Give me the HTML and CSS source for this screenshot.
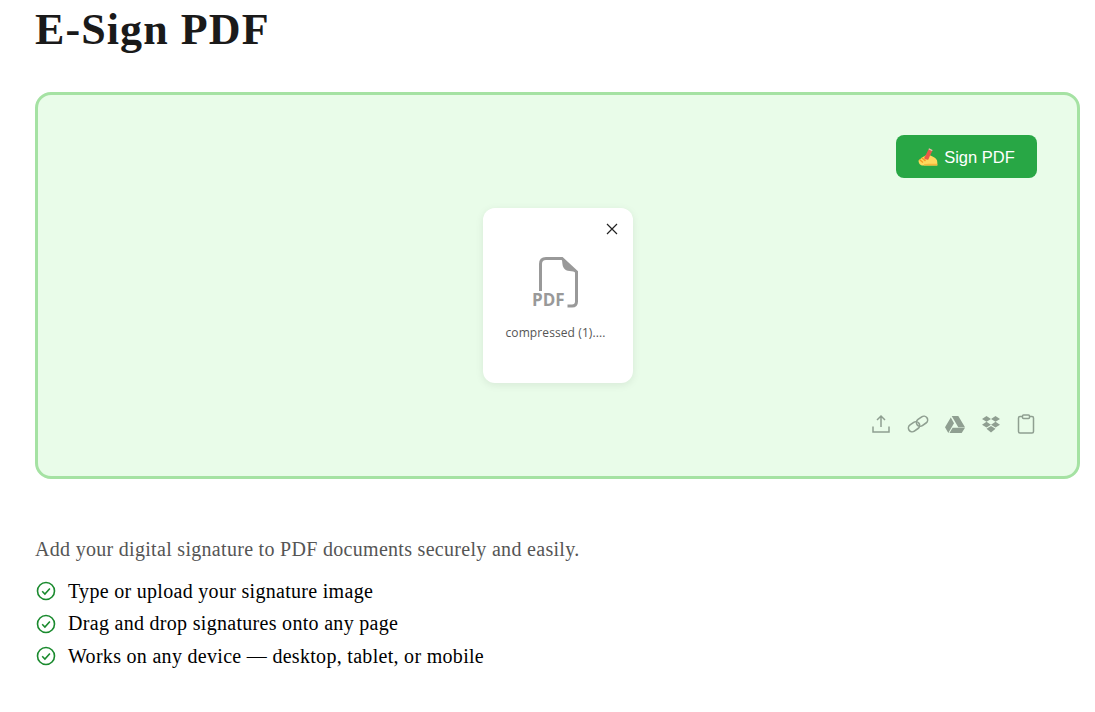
FILE: index.html
```html
<!DOCTYPE html>
<html lang="en">
<head>
  <meta charset="UTF-8">
  <meta name="viewport" content="width=device-width, initial-scale=1.0">
  <title>E-Sign PDF</title>
  <link rel="stylesheet" href="styles.css">
</head>
<body>
  <main class="page">
    <h1 class="title">E-Sign PDF</h1>

    <section class="dropzone">
      <div class="dropzone-top">
        <button class="sign-btn" type="button">
          <svg class="sign-emoji" viewBox="0 0 20 18" width="20" height="18">
            <path d="M0.500 12.500 4 9.500 8.500 7l4 .5 3 1.500c2.500 1 3.800 3 3.800 5.200V17.500H5C2.500 17.500.5 15.500.5 12.500Z" fill="#fdd85d"/>
            <path d="M1.500 11.500 5 14.500M3.800 9.800 7.500 13M6.500 8.500 10 11.500" stroke="#f59a23" stroke-width="1.500" fill="none"/>
            <path d="M6.500 9.500 10.500 1.500l3.600 1.700-3.800 8.300-3.800-.3Z" fill="#ea5a47"/>
            <path d="M10.500 1.500 11 .3l3.600 1.700-.5 1.200Z" fill="#f8b4a8"/>
            <path d="M6 16.200c4-.6 8-.6 13.300-.5V17.500H6Z" fill="#f6b73c"/>
          </svg>
          <span>Sign PDF</span>
        </button>
      </div>

      <div class="file-card">
        <button class="file-close" type="button" aria-label="Remove">
          <svg viewBox="0 0 12 12" width="12" height="12">
            <path d="M1 1l10 10M11 1 1 11" stroke="#222" stroke-width="1.200" fill="none"/>
          </svg>
        </button>
        <div class="file-icon">
          <svg viewBox="0 0 46 54" width="46" height="54">
            <path d="M8.500 34V7C8.500 3.500 10.500 1.500 14 1.500H30L44.500 15v29.500c0 3-1.700 4.500-4.500 4.500H35.500" fill="none" stroke="#999" stroke-width="3"/>
            <path d="M30 1c0 0 .2 6.500 1 8.500 .8 2.300 2.500 3.800 4.800 4.300L45 15Z" fill="#999"/>
            <text class="file-icon-label" x="0" y="49">PDF</text>
          </svg>
        </div>
        <div class="file-name">compressed (1)....</div>
      </div>

      <div class="source-icons">
        <svg viewBox="0 0 20 20" width="20" height="20">
          <path d="M10 13V2.500M6 6l4-4 4 4M2 12.500V18h16v-5.500" fill="none" stroke="#8f9f91" stroke-width="1.500"/>
        </svg>
        <svg viewBox="0 0 22 20" width="22" height="20">
          <g fill="none" stroke="#8f9f91" stroke-width="1.600">
            <rect x="1" y="9" width="12" height="7.500" rx="3.750" transform="rotate(-35 7 12.700)"/>
            <rect x="9" y="3.500" width="12" height="7.500" rx="3.750" transform="rotate(-35 15 7.200)"/>
          </g>
        </svg>
        <svg viewBox="0 0 20 17" width="20" height="17">
          <path d="M6.700 0h6.600L20 11.300h-6.700ZM5.800 1.600 9 7.200 3.300 17 0 11.300ZM7.600 11.700H20L16.700 17H4.500Z" fill="#8f9f91"/>
        </svg>
        <svg viewBox="0 0 20 17" width="20" height="17">
          <path d="M5.500 0 10 2.900 5.500 5.800 1 2.900ZM14.500 0 19 2.900 14.500 5.800 10 2.900ZM5.500 5.800 10 8.700l-4.500 2.900L1 8.700ZM14.500 5.800 19 8.700l-4.500 2.900L10 8.700ZM5.500 12.800 10 9.900l4.500 2.900L10 16.500Z" fill="#8f9f91"/>
        </svg>
        <svg viewBox="0 0 18 20" width="18" height="20">
          <path d="M5.500 2.500H3c-1 0-1.500.5-1.500 1.500v13.500c0 1 .5 1.500 1.500 1.500h12c1 0 1.500-.5 1.500-1.500V4c0-1-.5-1.500-1.500-1.500h-2.500" fill="none" stroke="#8f9f91" stroke-width="1.500"/>
          <rect x="5.500" y="1" width="7" height="3.500" rx="1" fill="none" stroke="#8f9f91" stroke-width="1.500"/>
        </svg>
      </div>
    </section>

    <section class="about">
      <p class="about-lead">Add your digital signature to PDF documents securely and easily.</p>
      <ul class="about-list">
        <li>
          <svg class="check" viewBox="0 0 20 20" width="20" height="20">
            <circle cx="10" cy="10" r="8.500"/><path d="M6.200 10.300 8.900 13l5-5.500"/>
          </svg>
          Type or upload your signature image
        </li>
        <li>
          <svg class="check" viewBox="0 0 20 20" width="20" height="20">
            <circle cx="10" cy="10" r="8.500"/><path d="M6.200 10.300 8.900 13l5-5.500"/>
          </svg>
          Drag and drop signatures onto any page
        </li>
        <li>
          <svg class="check" viewBox="0 0 20 20" width="20" height="20">
            <circle cx="10" cy="10" r="8.500"/><path d="M6.200 10.300 8.900 13l5-5.500"/>
          </svg>
          Works on any device — desktop, tablet, or mobile
        </li>
      </ul>
    </section>
  </main>
</body>
</html>
```

FILE: styles.css
```css
* {
  box-sizing: border-box;
}
body {
  margin: 0;
  background: #fff;
  font-family: "Liberation Serif", serif;
  color: #000;
}
.page {
  width: 1080px;
  padding-left: 35px;
}
.title {
  margin: 0;
  height: 92px;
  padding-top: 5px;
  font-size: 44px;
  line-height: 50px;
  font-weight: 700;
  color: #1a1a1a;
  letter-spacing: 1.1px;
}
.dropzone {
  height: 387px;
  border: 3px solid #a5e2a3;
  border-radius: 16px;
  background: #e9fce9;
  padding: 40px 40px 0;
  display: flex;
  flex-direction: column;
}
.dropzone-top {
  display: flex;
  justify-content: flex-end;
}
.sign-btn {
  width: 141px;
  height: 43px;
  border: none;
  border-radius: 8px;
  background: #28a745;
  color: #fff;
  font-family: "Liberation Sans", sans-serif;
  font-size: 16.500px;
  padding: 1px 0 0;
  display: flex;
  align-items: center;
  justify-content: center;
  gap: 6px;
}
.file-card {
  width: 150px;
  height: 175px;
  margin: 30px auto 0;
  position: relative;
  background: #fff;
  border-radius: 12px;
  box-shadow: 0 2px 8px rgba(0, 0, 0, 0.08);
  display: flex;
  flex-direction: column;
  align-items: center;
  padding-top: 49px;
}
.file-close {
  position: absolute;
  top: 15px;
  right: 15px;
  padding: 0;
  border: none;
  background: none;
  line-height: 0;
}
.file-icon {
  line-height: 0;
  height: 54px;
  margin-right: 6px;
}
.file-icon-label {
  font-family: "Open Sans", sans-serif;
  font-size: 17px;
  font-weight: 700;
  fill: #999;
}
.file-name {
  margin-top: 13px;
  margin-right: 4px;
  font-family: "Open Sans", sans-serif;
  font-size: 12px;
  letter-spacing: 0.1px;
  line-height: 18px;
  color: #555;
}
.source-icons {
  margin-top: 31px;
  margin-right: 2px;
  display: flex;
  justify-content: flex-end;
  align-items: center;
  gap: 16px;
}
.about {
  padding-top: 58px;
}
.about-lead {
  margin: 0 0 14px;
  font-size: 20px;
  letter-spacing: 0.3px;
  line-height: 24px;
  color: #555;
}
.about-list {
  margin: 0;
  padding: 0;
  list-style: none;
  font-size: 20px;
  letter-spacing: 0.3px;
}
.about-list li {
  display: flex;
  align-items: center;
  gap: 12px;
  height: 32.500px;
}
.check {
  flex: none;
  margin-left: 1px;
  fill: none;
  stroke: #1a8a2e;
  stroke-width: 1.600;
}
```
